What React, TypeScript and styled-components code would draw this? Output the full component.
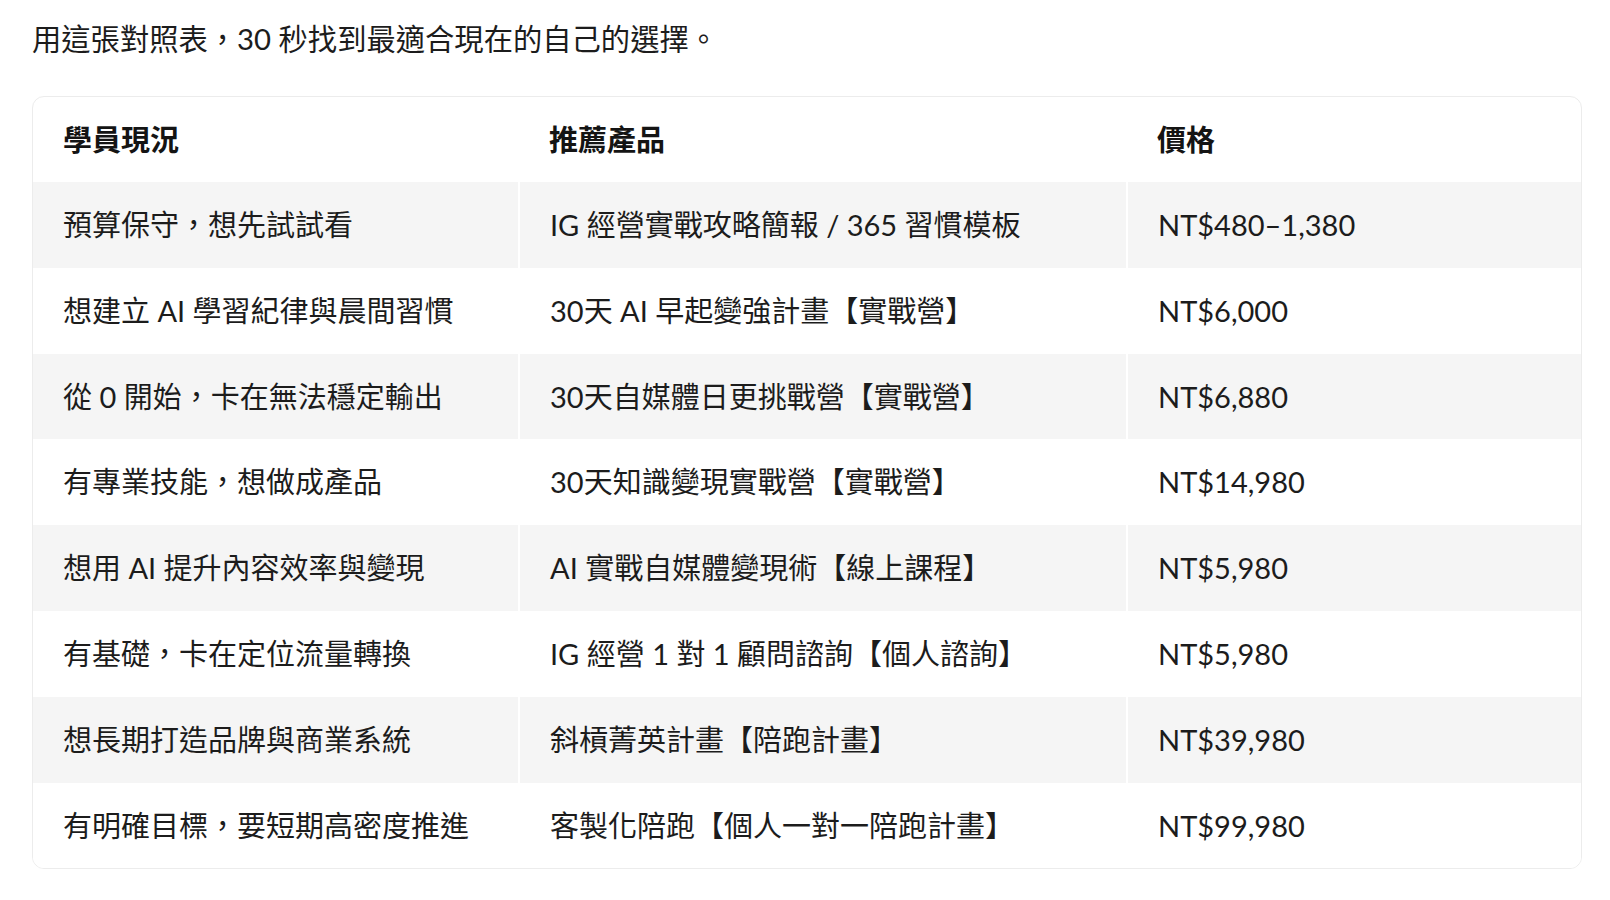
import React from 'react';
import styled, { createGlobalStyle } from 'styled-components';

const GlobalStyle = createGlobalStyle`
  html, body {
    margin: 0;
    padding: 0;
    background: #fff;
  }
  body {
    font-family: 'Lato', 'Noto Sans CJK TC', sans-serif;
    color: #1c1c1c;
  }
  * {
    box-sizing: border-box;
  }
`;

const Page = styled.div`
  padding: 18px 28px 40px 32px;
`;

const Intro = styled.p`
  margin: 0 0 36px;
  font-size: 29.3px;
  line-height: 42px;
  color: #1c1c1c;
`;

const TableWrap = styled.div`
  border: 1px solid #ececec;
  border-radius: 12px;
  overflow: hidden;
`;

const Table = styled.table`
  width: 100%;
  border-collapse: collapse;
  table-layout: fixed;
`;

const HeadCell = styled.th<{ $w?: number }>`
  width: ${p => (p.$w ? `${p.$w}px` : 'auto')};
  text-align: left;
  font-weight: 700;
  font-size: 29px;
  line-height: 43px;
  padding: 21px 30px;
  color: #141414;
`;

const Row = styled.tr<{ $striped: boolean }>`
  background: ${p => (p.$striped ? '#f5f5f5' : '#fff')};
`;

const Cell = styled.td`
  font-size: 29px;
  line-height: 43.8px;
  padding: 21px 30px;
  color: #1c1c1c;
  border-left: 2px solid #fff;
  &:first-child {
    border-left: none;
  }
`;

const rows: [string, string, string][] = [
  ['預算保守，想先試試看', 'IG 經營實戰攻略簡報 / 365 習慣模板', 'NT$480–1,380'],
  ['想建立 AI 學習紀律與晨間習慣', '30天 AI 早起變強計畫【實戰營】', 'NT$6,000'],
  ['從 0 開始，卡在無法穩定輸出', '30天自媒體日更挑戰營【實戰營】', 'NT$6,880'],
  ['有專業技能，想做成產品', '30天知識變現實戰營【實戰營】', 'NT$14,980'],
  ['想用 AI 提升內容效率與變現', 'AI 實戰自媒體變現術【線上課程】', 'NT$5,980'],
  ['有基礎，卡在定位流量轉換', 'IG 經營 1 對 1 顧問諮詢【個人諮詢】', 'NT$5,980'],
  ['想長期打造品牌與商業系統', '斜槓菁英計畫【陪跑計畫】', 'NT$39,980'],
  ['有明確目標，要短期高密度推進', '客製化陪跑【個人一對一陪跑計畫】', 'NT$99,980'],
];

export default function App() {
  return (
    <Page>
      <GlobalStyle />
      <Intro>用這張對照表，30 秒找到最適合現在的自己的選擇。</Intro>
      <TableWrap>
        <Table>
          <thead>
            <tr>
              <HeadCell $w={486}>學員現況</HeadCell>
              <HeadCell $w={608}>推薦產品</HeadCell>
              <HeadCell>價格</HeadCell>
            </tr>
          </thead>
          <tbody>
            {rows.map((r, i) => (
              <Row key={i} $striped={i % 2 === 0}>
                <Cell>{r[0]}</Cell>
                <Cell>{r[1]}</Cell>
                <Cell>{r[2]}</Cell>
              </Row>
            ))}
          </tbody>
        </Table>
      </TableWrap>
    </Page>
  );
}
